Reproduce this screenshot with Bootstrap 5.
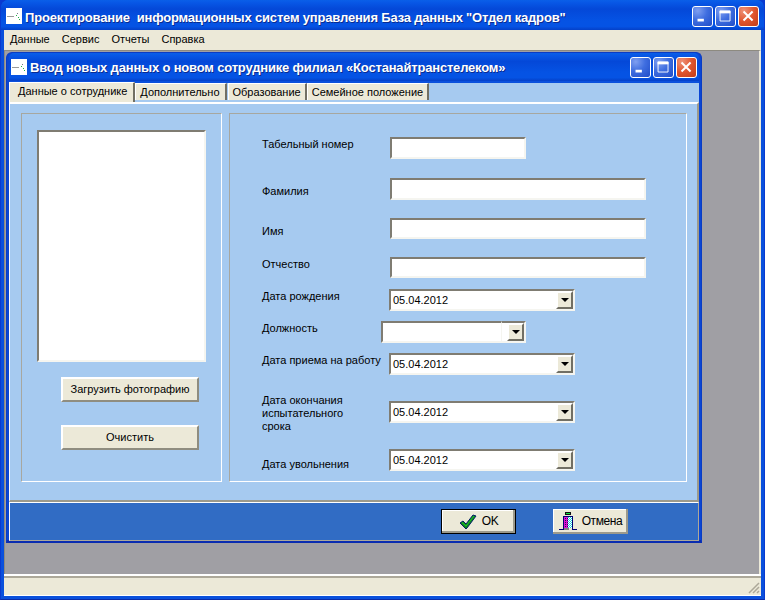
<!DOCTYPE html>
<html lang="ru"><head><meta charset="utf-8"><title>Отдел кадров</title>
<link href="https://cdn.jsdelivr.net/npm/bootstrap@5.3.0/dist/css/bootstrap.min.css" rel="stylesheet">
<style>
html,body{margin:0;height:600px;overflow:hidden;background:#0a3ad0}
body{font-family:"Liberation Sans",Arial,sans-serif;font-size:11px;color:#000;line-height:13px}
.xp-main{width:765px;height:600px;position:relative;background:#0a50dc;padding:0 4px 3px 4px;border-bottom:1px solid #0a2ca8;border-left:1px solid #0a3ad0;border-right:1px solid #0a3ad0;border-radius:8px 8px 0 0;overflow:hidden}
.xp-main-in{height:100%;display:flex;flex-direction:column}
.xp-bar{background:linear-gradient(#0a5fe8 0,#0858e6 8%,#0448d8 30%,#0553e4 70%,#0553e4 88%,#0440c8 100%);color:#fff;font-weight:700;display:flex;align-items:center;font-size:13px}
.bar-outer{height:30px;margin:0 -5px;padding:2px 6px 0 6px;flex:none}
.bar-inner{height:28px;padding:0 2px;flex:none;border-radius:5px 5px 0 0}
.bar-t{margin-left:3px;white-space:pre;text-shadow:1px 1px 0 #0a2c90;letter-spacing:-.18px}
.bar-outer .bar-t{position:relative;top:1px}
.app-ico{width:16px;height:16px;background:#fff;flex:none;display:block}
.wbtns{margin-left:auto;display:flex;gap:2px}
.wbtn{width:21px;height:21px;border:1px solid #fff;border-radius:3px;background:radial-gradient(circle at 25% 20%,#7f9ff0 0,#3f6ee0 45%,#1f4cc8 100%);display:block}
.wbtn.cl{background:radial-gradient(circle at 25% 20%,#ee9278 0,#e0552d 50%,#c23c18 100%)}
.xp-menu{height:20px;background:#ece9d8;display:flex;gap:12px;align-items:center;padding:0 6px 1px;flex:none;margin:0 -1px}
.mdi{flex:1 1 auto;background:#a09fa4;position:relative;border-top:1px solid #8d8a80;border-left:1px solid #8d8a80;margin-left:-1px;margin-right:-1px;border-right:2px solid #ece9d8}
.xp-status{height:22px;background:#ece9d8;border-top:2px solid #fff;border-bottom:1px solid #fff;flex:none;position:relative;margin:0 -1px}
.xp-status::before{content:"";display:block;height:2px;background:#aca899}
.grip{position:absolute;right:1px;bottom:1px;display:block}
.child{position:absolute;left:1px;top:1px;width:696px;height:491px;background:#0a46d4;padding:0 2px;border:1px solid #0a3cc4;border-bottom:3px solid #0a2cb0;border-radius:6px 6px 0 0;display:flex;flex-direction:column}
.tabs-row{flex:none;height:21px;display:flex;align-items:flex-end;background:linear-gradient(#0a50dc 0,#0a50dc 2px,#a6caf0 2px)}
.tb{display:block;background:#ece9d8;height:17px;margin-bottom:2px;padding:0 4px;line-height:16px;border-top:1px solid #fff;border-left:1px solid #fff;border-right:2px solid #716f64;margin-right:1px;white-space:nowrap}
.tb.on{height:20px;margin-bottom:0;padding:0 6px 0 8px;line-height:17px;margin-right:0}
.tb.t2{padding-right:5px}
.tb.t3{margin-right:0}
.page-area{height:400px;flex:none;background:#a6caf0;border-top:2px solid #fff;display:flex;gap:7px;padding:9px 10px 18px 11px;border-bottom:2px solid #9c9a8c;border-left:1px solid #fff;border-right:2px solid #9c9a8c}
.grp{border:1px solid;border-color:#a7a79f #fff #fff #a7a79f;height:369px;display:block}
.grp-l{width:201px;padding:16px 15px 0 15px}
.grp-r{width:458px;padding:0 0 0 32px}
.photo{width:169px;height:232px;background:#fff;border:2px solid;border-color:#7f7c72 #f5f5f0 #f5f5f0 #7f7c72}
.xp-btn{display:flex;align-items:center;justify-content:center;background:#ece9d8;border:2px solid;border-color:#fff #8f8d80 #8f8d80 #fff;width:138px;height:25px;font-size:11px;margin:0 0 0 24px;padding:0;color:#000}
.xp-btn.b1{margin-top:15px}
.xp-btn.b2{margin-top:23px}
.frow{display:flex;align-items:flex-start}
.flab{width:128px;flex:none;white-space:nowrap}
.r1{margin-top:23px}.r2{margin-top:19px}.r3{margin-top:18px}.r4{margin-top:18px}.r5{margin-top:11px}.r6{margin-top:10px}.r7{margin-top:10px}.r8{margin-top:26px}.r9{margin-top:26px}
.lb1{padding-top:1px}.lb2{padding-top:7px}.lb8{margin-top:-7px;margin-bottom:-10px}.lb9{padding-top:9px}
.inp{display:block;height:22px;background:#fff;border:2px solid;border-color:#7f7c72 #f5f5f0 #f5f5f0 #7f7c72}
.inp.sh{height:21px}
.w1{width:136px}.w2{width:256px}
.sel{display:flex;width:186px;height:22px;background:#fff;border:2px solid;border-color:#7f7c72 #f5f5f0 #f5f5f0 #7f7c72;margin-left:-1px;align-items:center;padding-left:2px;position:relative;justify-content:space-between}
.arr{display:flex;align-items:center;justify-content:center;width:17px;height:18px;background:#ece9d8;border:2px solid;border-color:#fff #716f64 #716f64 #fff}
.arr::after{content:"";border-left:4px solid transparent;border-right:4px solid transparent;border-top:4px solid #000}
.combo{display:flex;margin-left:-9px;width:145px;height:22px}
.combo-in{width:121px;height:22px;background:#fff;border:2px solid;border-color:#7f7c72 #f5f5f0 #f5f5f0 #7f7c72;border-right:1px solid #f5f5f0}
.combo-a{width:24px;height:22px;border:2px solid;border-color:#7f7c72 #f5f5f0 #f5f5f0 #7f7c72;border-left:0;display:flex;align-items:center;justify-content:flex-end;background:#fff}
.footbar{height:39px;background:#316cc4;flex:none;border:1px solid;border-color:#fff #aca899 #aca899 #fff;display:flex;align-items:center;padding-left:431px}
.fbtn{display:flex;align-items:center;justify-content:center;background:#ece9d8;height:25px;width:75px;gap:5px;padding:0;font-size:12px;letter-spacing:-.4px}
.fbtn.ok{border:1px solid #000;box-shadow:inset -2px -2px 0 #9c9a8c,inset 1px 1px 0 #fff}
.fbtn.no{margin-left:37px;border:0;box-shadow:inset -2px -2px 0 #9c9a8c,inset 1px 1px 0 #fff}
</style></head><body>
<svg width="0" height="0" class="d-block"><defs>
<symbol id="aico" viewBox="0 0 16 16"><rect width="16" height="16" fill="#fff"/><path d="M1 8.5h7" stroke="#9a9a9a"/><path d="M10 7h1v1h-1zM12 9h1v1h-1zM13 11h1v1h-1z" fill="#22b04a"/><path d="M11 5h1v1h-1z" fill="#778"/></symbol>
<pattern id="dm" width="2" height="2" patternUnits="userSpaceOnUse"><rect width="2" height="2" fill="#e010d0"/><rect width="1" height="1" fill="#300060"/></pattern>
<pattern id="dc" width="2" height="2" patternUnits="userSpaceOnUse"><rect width="2" height="2" fill="#fff"/><rect width="1" height="1" fill="#20d0e0"/><rect x="1" y="1" width="1" height="1" fill="#20d0e0"/></pattern>
</defs></svg>
<div class="xp-main"><div class="xp-main-in">
<div class="xp-bar bar-outer">
<svg class="app-ico"><use href="#aico"/></svg>
<span class="bar-t">Проектирование  информационных систем управления База данных "Отдел кадров"</span>
<div class="wbtns">
<svg class="wbtn" viewBox="0 0 21 21"><rect x="5" y="13" width="7" height="3" fill="#fff"/></svg>
<svg class="wbtn" viewBox="0 0 21 21"><path d="M4.5 4.5h11v11h-11z" fill="none" stroke="#fff"/><rect x="4" y="4" width="12" height="3" fill="#fff"/></svg>
<svg class="wbtn cl" viewBox="0 0 21 21"><path d="M5 5l10 10M15 5L5 15" stroke="#fff" stroke-width="2.2"/></svg>
</div></div>
<nav class="xp-menu"><span>Данные</span><span>Сервис</span><span>Отчеты</span><span>Справка</span></nav>
<div class="mdi">
<div class="child">
<div class="xp-bar bar-inner">
<svg class="app-ico"><use href="#aico"/></svg>
<span class="bar-t">Ввод новых данных о новом сотруднике филиал «Костанайтранстелеком»</span>
<div class="wbtns">
<svg class="wbtn" viewBox="0 0 21 21"><rect x="5" y="13" width="7" height="3" fill="#fff"/></svg>
<svg class="wbtn" viewBox="0 0 21 21"><path d="M4.5 4.5h11v11h-11z" fill="none" stroke="#fff"/><rect x="4" y="4" width="12" height="3" fill="#fff"/></svg>
<svg class="wbtn cl" viewBox="0 0 21 21"><path d="M5 5l10 10M15 5L5 15" stroke="#fff" stroke-width="2.2"/></svg>
</div></div>
<div class="tabs-row"><span class="tb on">Данные о сотруднике</span><span class="tb t2">Дополнительно</span><span class="tb t3">Образование</span><span class="tb">Семейное положение</span></div>
<div class="page-area">
<section class="grp grp-l"><div class="photo"></div>
<button type="button" class="xp-btn b1">Загрузить фотографию</button><button type="button" class="xp-btn b2">Очистить</button></section>
<section class="grp grp-r">
<div class="frow r1"><span class="flab lb1">Табельный номер</span><span class="inp w1"></span></div>
<div class="frow r2"><span class="flab lb2">Фамилия</span><span class="inp w2"></span></div>
<div class="frow r3"><span class="flab lb2">Имя</span><span class="inp sh w2"></span></div>
<div class="frow r4"><span class="flab lb1">Отчество</span><span class="inp sh w2"></span></div>
<div class="frow r5"><span class="flab lb1">Дата рождения</span><span class="sel">05.04.2012<i class="arr"></i></span></div>
<div class="frow r6"><span class="flab lb1">Должность</span><span class="combo"><span class="combo-in"></span><span class="combo-a"><i class="arr"></i></span></span></div>
<div class="frow r7"><span class="flab lb1">Дата приема на работу</span><span class="sel">05.04.2012<i class="arr"></i></span></div>
<div class="frow r8"><span class="flab lb8">Дата окончания<br>испытательного<br>срока</span><span class="sel">05.04.2012<i class="arr"></i></span></div>
<div class="frow r9"><span class="flab lb9">Дата увольнения</span><span class="sel">05.04.2012<i class="arr"></i></span></div>
</section>
</div>
<div class="footbar">
<button type="button" class="fbtn ok"><svg width="18" height="16" viewBox="0 0 18 16"><path d="M1 9l3-2 3 3L14 1l3 1-9 12-1 1z" fill="#0c8a18" stroke="#04206a" stroke-width="1"/><path d="M3 8.5l4 3.5 8-10" fill="none" stroke="#20c030" stroke-width="1"/></svg>OK</button>
<button type="button" class="fbtn no"><svg width="18" height="19" viewBox="0 0 18 19" shape-rendering="crispEdges"><rect x="6" y="0" width="6" height="3" fill="#111"/><rect x="7" y="1" width="4" height="1" fill="#10e040"/><rect x="5" y="5" width="4" height="11" fill="url(#dm)"/><rect x="9" y="5" width="4" height="11" fill="url(#dc)"/><rect x="4" y="4" width="1" height="13" fill="#000070"/><rect x="13" y="4" width="1" height="13" fill="#000070"/><rect x="5" y="4" width="8" height="1" fill="#000070"/><rect x="5" y="16" width="5" height="2" fill="#808080"/><rect x="0" y="17" width="5" height="1" fill="#000070"/><rect x="13" y="17" width="5" height="1" fill="#000070"/></svg>Отмена</button>
</div>
</div>
</div>
<div class="xp-status"><svg class="grip" width="12" height="12" viewBox="0 0 12 12"><path d="M11 1L1 11M11 5l-6 6M11 9l-2 2" stroke="#aca899" stroke-width="1.5"/></svg></div>
</div></div>
</body></html>
